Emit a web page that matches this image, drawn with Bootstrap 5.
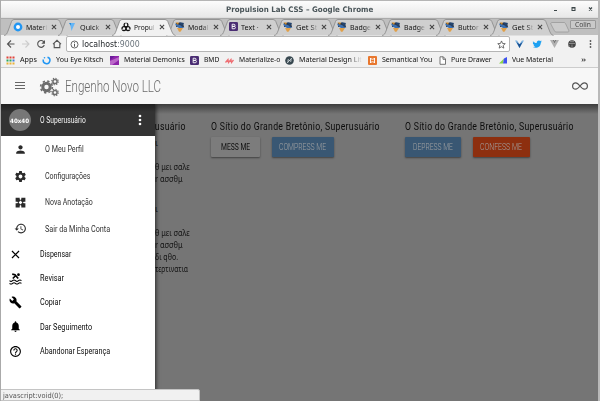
<!DOCTYPE html>
<html lang="pt">
<head>
<meta charset="utf-8">
<title>Propulsion Lab CSS</title>
<link href="https://cdn.jsdelivr.net/npm/bootstrap@5.3.0/dist/css/bootstrap.min.css" rel="stylesheet">
<style>
html,body{height:401px;overflow:hidden}
body{font-family:"Noto Sans","Open Sans",sans-serif;font-size:7.6px;line-height:1;color:#111;background:#f1f1f1}
svg{display:block;flex:none}
.fit{display:inline-block;flex:none;white-space:nowrap;transform-origin:0 50%}
.window{width:600px;height:401px;border-left:1px solid #aaa;border-right:2px solid #b9b9b9;overflow:hidden}
.titlebar{height:18px;background:linear-gradient(#b5b5b5 0,#b5b5b5 1px,#fcfcfc 1px,#e8e8e8 17px,#d6d6d6)}
.wtitle{font:bold 7.6px "DejaVu Sans",sans-serif;color:#4b565a;padding-left:225px;flex:none;width:549px}
.tabstrip{height:17px;background:#bfbfbf;padding-left:3px;border-top:1px solid #aaa}
.ctab{width:54px;height:16px;flex:none}
.ctab .shape{position:absolute;left:0;top:0}
.ctab .face{position:relative;width:54px;height:15px;padding-left:9px}
.ctab.active-tab{z-index:2}
.tname{width:22px;margin-left:3px;margin-right:3px;height:12px;line-height:12px;-webkit-mask-image:linear-gradient(90deg,#000 65%,transparent 98%)}
.newtab{margin:3px 0 0 6px}
.user{width:26px;height:9px;margin:1px 2px 0 auto;border:1px solid #999;background:#c9c9c9;color:#444;border-radius:1px}
.toolbar{height:18px;background:#f1f1f1}
.omni{width:444px;height:16px;background:#fff;border:1px solid #b5b5b5;border-radius:2px;padding:0 3px 0 3px;margin-left:4px}
.url{font:8.4px "DejaVu Sans",sans-serif;margin-left:3px}
.marks{display:grid;grid-template-columns:36px 68px 80px 35px 60px 83px 69.5px 61px 82px 12px;height:15px;padding-left:5px;align-items:center;border-bottom:1px solid #ccc}
.marks svg{width:9px;height:9px}
.marks .lbl{margin-left:4.5px}
.fade-end{-webkit-mask-image:linear-gradient(90deg,#000 80%,transparent)}
.appbar{height:36px;background:#f7f7f7;z-index:3;position:relative}
.brand{font:300 16.5px Roboto,sans-serif;color:#6c6c6c;margin-left:6px}
.stage{height:297px;background:#757575;position:relative;overflow:hidden}
.stage::before{content:"";position:absolute;inset:0 0 auto;height:10px;background:linear-gradient(#3d3d3d,#757575)}
.pane{padding-top:17px;width:194px;flex:none}
.pane h2{font:400 10.5px/12px Roboto,sans-serif;color:#0c0c0c;letter-spacing:.35px;margin:0 0 4px;height:12px}
.push{height:20px;border-radius:1px;font:300 8.6px Roboto,sans-serif;border:0;padding:0;box-shadow:0 1px 2px rgba(0,0,0,.45);color:#a2a2a2;display:flex;align-items:center;justify-content:center;flex:none}
.push-flat{background:#7c7c7c;color:#111;font-weight:400;width:49px}
.push-blue{background:#395773}
.push-red{background:#8d2f0f}
.w-compress{width:62px}
.w-depress{width:55.5px}
.w-confess{width:57px}
.gap-btn{gap:12px}
.greek{padding-left:154px;font:8px/12.05px "Noto Sans",sans-serif;color:#141414}
.greek div{height:12.05px;white-space:nowrap}
.greek .para{height:auto;margin-bottom:17.8px}
.drawer{position:absolute;left:0;top:0;width:153.5px;height:297px;background:#fff;box-shadow:1px 0 4px rgba(0,0,0,.65);font-family:Roboto,sans-serif;font-size:8.6px}
.who{height:32px;background:linear-gradient(#202020,#333 8px);color:#f4f4f4;margin-bottom:.5px}
.avatar{width:22px;height:22px;margin-left:8px;background:#777;font:bold 6px "DejaVu Sans",sans-serif;color:#fff}
.who-name{margin-left:9px}
.opt{height:26.4px;padding-left:12.5px;color:#333}
.opt .fit{margin-left:18px}
.act{height:24.25px;padding-left:8px;color:#0a0a0a}
.act .fit{margin-left:17.5px}
.status{position:absolute;left:-1px;bottom:0;width:200px;height:12px;background:#f1f1f1;border:1px solid #c4c4c4;color:#555;font:7.2px "DejaVu Sans",sans-serif;padding-left:2px;border-radius:0 2px 0 0}
</style>
<script src="https://cdn.jsdelivr.net/npm/bootstrap@5.3.0/dist/js/bootstrap.bundle.min.js"></script>
</head>
<body>
<svg width="0" height="0" class="position-absolute">
<defs>
<symbol id="shape" viewBox="0 0 64 17"><path d="M0 16.5C2.5 16 3 14.500 4 12L7.500 2.500Q8.200.500 10 .500H53Q55 .500 55.800 2.500L60 13Q61 16 63.500 16.500" stroke="#8f8f8f" stroke-width=".9"/></symbol>
<symbol id="mdl" viewBox="0 0 10 10"><path fill="#2a3444" d="M1 1H8L9 5H1z"/><path fill="#3b6fb0" d="M0 1.500L5 3 9.500 6H4L1 4z"/><path fill="#e0a04a" d="M2 6H8L5.500 9.700H4z"/><path fill="#c9892e" d="M.5.500H4L3 3z"/><path fill="#23436d" d="M4 0L9 1 7 5z"/></symbol>
<symbol id="cls" viewBox="0 0 6 6"><path d="M.9.900L5.100 5.100M5.100.900L.9 5.100" stroke="#444" stroke-width="1.050"/></symbol>
<symbol id="boot" viewBox="0 0 10 10"><rect width="10" height="10" rx="1.500" fill="#4a2d73"/><path d="M3.500 2.500H5.500a1.200 1.200 0 0 1 0 2.400H3.500zM3.500 4.900H5.800a1.300 1.300 0 0 1 0 2.600H3.500z" fill="none" stroke="#fff" stroke-width="1"/></symbol>
<symbol id="gear" viewBox="0 0 24 24"><path d="M19.430 12.980c.04-.32.070-.64.070-.98s-.03-.66-.07-.98l2.110-1.650c.19-.15.240-.42.120-.64l-2-3.460c-.12-.22-.39-.3-.61-.22l-2.490 1c-.52-.4-1.080-.73-1.690-.98l-.38-2.650C14.460 2.180 14.250 2 14 2h-4c-.25 0-.46.180-.49.420l-.38 2.650c-.61.250-1.170.590-1.690.980l-2.490-1c-.23-.09-.49 0-.61.220l-2 3.460c-.13.220-.07.490.12.640l2.110 1.650c-.04.320-.07.650-.07.980s.03.660.070.980l-2.110 1.650c-.19.150-.24.420-.12.640l2 3.460c.12.220.39.300.61.220l2.490-1c.52.400 1.080.730 1.690.980l.38 2.650c.03.240.24.420.49.420h4c.25 0 .46-.18.490-.42l.38-2.650c.61-.25 1.170-.59 1.690-.98l2.490 1c.23.090.49 0 .61-.22l2-3.460c.12-.22.070-.49-.12-.64l-2.110-1.650zM12 15.500c-1.930 0-3.500-1.570-3.500-3.500s1.570-3.500 3.500-3.500 3.500 1.570 3.500 3.500-1.570 3.500-3.500 3.500z"/></symbol>
</defs>
</svg>
<div class="window d-flex flex-column">
  <div class="titlebar d-flex align-items-center flex-shrink-0">
    <div class="wtitle"><span class="fit" data-w="147">Propulsion Lab CSS – Google Chrome</span></div>
    <svg width="48" height="9" viewBox="0 0 48 9" fill="#3c4648"><rect x="4" y="5" width="3" height="1"/><path fill-rule="evenodd" d="M21.500 2h4v4h-4zM22.500 3.500v1.500h2V3.500z"/><path d="M39 2.500l3 3m0-3l-3 3" stroke="#3c4648" stroke-width="1.200"/></svg>
  </div>
  <div class="tabstrip d-flex flex-shrink-0">
    <div class="ctab position-relative"><svg class="shape" width="64" height="17" fill="#cfcfcf"><use href="#shape"/></svg><div class="face d-flex align-items-center"><svg width="10" height="10" viewBox="0 0 10 10"><circle cx="5" cy="5" r="3.200" fill="#fff" stroke="#2196f3" stroke-width="2.400"/></svg><div class="tname"><span class="fit" data-w="21">Materi</span></div><svg width="6" height="6"><use href="#cls"/></svg></div></div>
    <div class="ctab position-relative"><svg class="shape" width="64" height="17" fill="#cfcfcf"><use href="#shape"/></svg><div class="face d-flex align-items-center"><svg width="10" height="10" viewBox="0 0 10 10"><path fill="#1a86d8" d="M2 1H5L4 4z"/><path fill="#64b5f6" d="M4 1H8L4.500 9 3.500 4z"/></svg><div class="tname"><span class="fit" data-w="19">Quick</span></div><svg width="6" height="6"><use href="#cls"/></svg></div></div>
    <div class="ctab active-tab position-relative"><svg class="shape" width="64" height="17" fill="#f1f1f1"><use href="#shape"/></svg><div class="face d-flex align-items-center"><svg width="10" height="10" viewBox="0 0 10 10" fill="none" stroke="#111" stroke-width="1.250"><circle cx="5" cy="3" r="1.900"/><circle cx="3" cy="6.500" r="2"/><circle cx="7" cy="6.500" r="2"/><path stroke="#f1f1f1" stroke-width="1" d="M5 0V2M0 8.500l1.500-1M10 8.500l-1.500-1"/></svg><div class="tname"><span class="fit" data-w="21">Propul</span></div><svg width="6" height="6"><use href="#cls"/></svg></div></div>
    <div class="ctab position-relative"><svg class="shape" width="64" height="17" fill="#cfcfcf"><use href="#shape"/></svg><div class="face d-flex align-items-center"><svg width="10" height="10"><use href="#mdl"/></svg><div class="tname"><span class="fit" data-w="20">Modal</span></div><svg width="6" height="6"><use href="#cls"/></svg></div></div>
    <div class="ctab position-relative"><svg class="shape" width="64" height="17" fill="#cfcfcf"><use href="#shape"/></svg><div class="face d-flex align-items-center"><svg width="9" height="9"><use href="#boot"/></svg><div class="tname"><span class="fit" data-w="18">Text ·</span></div><svg width="6" height="6"><use href="#cls"/></svg></div></div>
    <div class="ctab position-relative"><svg class="shape" width="64" height="17" fill="#cfcfcf"><use href="#shape"/></svg><div class="face d-flex align-items-center"><svg width="10" height="10"><use href="#mdl"/></svg><div class="tname"><span class="fit" data-w="21">Get St</span></div><svg width="6" height="6"><use href="#cls"/></svg></div></div>
    <div class="ctab position-relative"><svg class="shape" width="64" height="17" fill="#cfcfcf"><use href="#shape"/></svg><div class="face d-flex align-items-center"><svg width="10" height="10"><use href="#mdl"/></svg><div class="tname"><span class="fit" data-w="21">Badge</span></div><svg width="6" height="6"><use href="#cls"/></svg></div></div>
    <div class="ctab position-relative"><svg class="shape" width="64" height="17" fill="#cfcfcf"><use href="#shape"/></svg><div class="face d-flex align-items-center"><svg width="10" height="10"><use href="#mdl"/></svg><div class="tname"><span class="fit" data-w="21">Badge</span></div><svg width="6" height="6"><use href="#cls"/></svg></div></div>
    <div class="ctab position-relative"><svg class="shape" width="64" height="17" fill="#cfcfcf"><use href="#shape"/></svg><div class="face d-flex align-items-center"><svg width="10" height="10"><use href="#mdl"/></svg><div class="tname"><span class="fit" data-w="22">Button</span></div><svg width="6" height="6"><use href="#cls"/></svg></div></div>
    <div class="ctab position-relative"><svg class="shape" width="64" height="17" fill="#cfcfcf"><use href="#shape"/></svg><div class="face d-flex align-items-center"><svg width="10" height="10"><use href="#mdl"/></svg><div class="tname"><span class="fit" data-w="21">Get St</span></div><svg width="6" height="6"><use href="#cls"/></svg></div></div>
    <svg class="newtab" width="20" height="11" viewBox="0 0 20 11"><path d="M1.500.500H14Q15 .500 15.500 1.500L19 9Q19 10 18 10H6Q5 10 4.500 9L.8 2Q.5.800 1.500.500z" fill="#cbcbcb" stroke="#999" stroke-width=".8"/></svg>
    <div class="user d-flex align-items-center ps-1"><span class="fit" data-w="16">Colin</span></div>
  </div>
  <div class="toolbar d-flex align-items-center flex-shrink-0">
    <svg width="61" height="16" viewBox="0 0 61 16" fill="none" stroke="#555" stroke-width="1.100"><path d="M13.500 8H6.500M10 4.500L6.500 8 10 11.500"/><path stroke="#ccc" d="M21 8H28M24.500 4.500L28 8 24.500 11.500"/><path d="M43 6.200A3.400 3.400 0 1 0 43.300 9"/><path fill="#555" stroke="none" d="M44 4V7.700H40.300z"/><path d="M52 8.200L56 4.300 60 8.200M53.200 7.500V11.600H58.800V7.500"/></svg>
    <div class="omni d-flex align-items-center">
      <svg width="9" height="9" viewBox="0 0 9 9"><circle cx="4.500" cy="4.500" r="3.500" fill="none" stroke="#555" stroke-width=".9"/><path d="M4 4h1v2.800H4zM4 2.300h1v1H4z" fill="#555"/></svg>
      <div class="url"><span class="fit" data-w="58"><span class="text-dark">localhost</span><span class="text-secondary">:9000</span></span></div>
      <svg class="ms-auto" width="9" height="9" viewBox="0 0 24 24"><path d="M12 2.500l2.800 6.700 7.200.6-5.500 4.800 1.700 7.100L12 17.900l-6.200 3.800 1.700-7.100L2 9.800l7.200-.6z" fill="none" stroke="#555" stroke-width="2.200"/></svg>
    </div>
    <svg width="86" height="16" viewBox="0 0 86 16"><path fill="#7fb3e0" d="M5 4.500H7L9.500 8 12 4.500H14L9.500 12z"/><path fill="#174f91" d="M6.500 6L9.500 12 12.500 6 9.500 8.200z"/><path fill="#1da1f2" d="M23 5.200c1 1.200 2.200 1.700 3.700 1.800-.3-2 2.200-3.300 3.600-1.900l1.300-.5-.8 1.200 1.100-.3-1.100 1.200c.1 4-4.300 6.300-8 4.300 1 .1 1.800-.2 2.500-.7-.9-.1-1.500-.6-1.800-1.400l.8-.1c-.9-.3-1.400-1-1.400-1.900l.8.200C22.800 6.500 22.700 5.800 23 5.200z"/><path fill="#b0b0b0" d="M40 4H42.500L44.500 7.500 46.500 4H49L44.500 12z"/><path fill="#777" d="M42.500 4H44L44.500 5 45 4H46.500L44.500 7.500z"/><circle cx="62" cy="8" r="3.800" fill="#444"/><path d="M59 7.500h6M62 8.500v3M60 5.700l4 0M59.500 9.500l-1 1.500" stroke="#999" stroke-width=".8"/><g fill="#555"><circle cx="80.500" cy="5" r=".9"/><circle cx="80.500" cy="8" r=".9"/><circle cx="80.500" cy="11" r=".9"/></g></svg>
  </div>
  <div class="marks flex-shrink-0">
    <div class="d-flex align-items-center"><svg viewBox="0 0 9 9"><path d="M.5 1.500h8" stroke="#e0443a" stroke-width="2" stroke-dasharray="2 1"/><path d="M.5 4.500h5" stroke="#2da85c" stroke-width="2" stroke-dasharray="2 1"/><path d="M6.500 4.500h2" stroke="#3b7de0" stroke-width="2"/><path d="M.5 7.500h8" stroke="#eab43a" stroke-width="2" stroke-dasharray="2 1"/></svg><span class="lbl fit" data-w="17">Apps</span></div>
    <div class="d-flex align-items-center"><svg viewBox="0 0 9 9"><path d="M5.500 1.200A3.300 3.300 0 1 1 1.400 3.500" fill="none" stroke="#2196f3" stroke-width="1.500"/><circle cx="2.500" cy="1.800" r=".8" fill="#2196f3"/></svg><span class="lbl fit" data-w="47.500">You Eye Kitsch</span></div>
    <div class="d-flex align-items-center"><svg viewBox="0 0 9 9"><path fill="#8e24aa" d="M0 0h9v9H0z"/><path fill="#ba68c8" d="M0 5L9 1v3L2 9H0z"/><path fill="#6a1b9a" d="M0 0h5L0 4z"/></svg><span class="lbl fit" data-w="61">Material Demonics</span></div>
    <div class="d-flex align-items-center"><svg><use href="#boot"/></svg><span class="lbl fit" data-w="15">BMD</span></div>
    <div class="d-flex align-items-center"><svg viewBox="0 0 9 9" fill="none" stroke="#ee6e73" stroke-width="1.300"><path d="M.5 6.500L3 3.500 3.500 6.500 6 3.500 6.500 6.500 8.500 4"/></svg><span class="lbl fit" data-w="41">Materialize-o</span></div>
    <div class="d-flex align-items-center"><svg viewBox="0 0 9 9"><circle cx="4.500" cy="4.500" r="4.300" fill="#37474f"/><path d="M3 6.500V3.500L6 5.500V2.500M2 7l5-5" stroke="#cfd8dc" stroke-width=".8" fill="none"/></svg><span class="lbl fit fade-end" data-w="63">Material Design Lit</span></div>
    <div class="d-flex align-items-center"><svg viewBox="0 0 9 9"><rect width="9" height="9" rx="1" fill="#e8772e"/><path d="M2 2.500q2.500 1.500 5 0M2 6.500q2.500-1.500 5 0M2.500 2v5M6.500 2v5" stroke="#fff" stroke-width=".9" fill="none"/></svg><span class="lbl fit" data-w="50">Semantical You</span></div>
    <div class="d-flex align-items-center"><svg viewBox="0 0 9 9"><path d="M2 .8H5.300L7.500 3V8.300H2zM5 .8V3.300H7.500" fill="#fff" stroke="#555" stroke-width=".8"/></svg><span class="lbl fit" data-w="41">Pure Drawer</span></div>
    <div class="d-flex align-items-center"><svg viewBox="0 0 9 9"><path fill="#8bd34a" d="M0 7.500L5 2.500 4 7.500z"/><path fill="#3f51f0" d="M5 2.500L8 1V7.500H4z"/></svg><span class="lbl fit" data-w="41">Vue Material</span></div>
    <div><span class="fit" data-w="5.500">»</span></div>
  </div>
  <div class="appbar d-flex align-items-center flex-shrink-0">
    <svg width="36" height="36" viewBox="0 0 36 36"><path d="M14 14.500H24M14 17.500H24M14 20.500H24" stroke="#666" stroke-width="1"/></svg>
    <svg width="22" height="22" viewBox="0 0 22 22"><g fill="none" stroke="#6c6c6c"><circle cx="9.500" cy="12" r="3.700" stroke-width="3"/><circle cx="9.500" cy="12" r="5.900" stroke-width="1.600" stroke-dasharray="2.320 2.320"/><circle cx="18" cy="6.500" r="2.100" stroke-width="1.500"/><circle cx="18" cy="6.500" r="3.300" stroke-width="1.100" stroke-dasharray="1.300 1.290"/><circle cx="18" cy="17.500" r="2.100" stroke-width="1.500"/><circle cx="18" cy="17.500" r="3.300" stroke-width="1.100" stroke-dasharray="1.300 1.290"/></g></svg>
    <div class="brand"><span class="fit" data-w="96">Engenho Novo LLC</span></div>
    <svg class="ms-auto me-2" width="20" height="16" viewBox="0 0 20 16"><path d="M10 8C8 5.500 6.800 4.800 5.800 4.800a3.200 3.200 0 0 0 0 6.400C6.800 11.200 8 10.500 10 8s3.200-3.200 4.200-3.200a3.200 3.200 0 0 1 0 6.400C13.200 11.200 12 10.500 10 8z" fill="none" stroke="#555" stroke-width="1.200"/></svg>
  </div>
  <div class="stage flex-shrink-0">
    <div class="d-flex">
      <div class="pane"><h2 class="ps-3"><span class="fit" data-w="169">O Sítio do Grande Bretônio, Superusuário</span></h2>
        <div class="greek">
          <div class="para"><div>ι</div><div></div><div><span class="fit" data-w="35">θ μει σαλε</span></div><div><span class="fit" data-w="28">r ασσθμ</span></div></div>
          <div class="para"><div>ι</div><div></div><div><span class="fit" data-w="35">θ μει σαλε</span></div><div><span class="fit" data-w="28">r ασσθμ</span></div><div><span class="fit" data-w="23">δι qθο.</span></div><div><span class="fit" data-w="33">τερτινατια</span></div></div>
        </div>
      </div>
      <div class="pane ps-3"><h2><span class="fit" data-w="169">O Sítio do Grande Bretônio, Superusuário</span></h2>
        <div class="d-flex gap-btn"><button class="push push-flat"><span class="fit" data-w="29">MESS ME</span></button><button class="push push-blue w-compress"><span class="fit" data-w="47">COMPRESS ME</span></button></div></div>
      <div class="pane ps-3"><h2><span class="fit" data-w="169">O Sítio do Grande Bretônio, Superusuário</span></h2>
        <div class="d-flex gap-btn"><button class="push push-blue w-depress"><span class="fit" data-w="40">DEPRESS ME</span></button><button class="push push-red w-confess"><span class="fit" data-w="42">CONFESS ME</span></button></div></div>
    </div>
    <div class="drawer">
      <div class="who d-flex align-items-center"><div class="avatar rounded-circle d-flex align-items-center justify-content-center"><span class="fit" data-w="19.500">40x40</span></div><span class="fit who-name" data-w="46">O Superusuário</span>
        <svg class="ms-auto" width="28" height="12" viewBox="0 0 28 12" fill="#fff"><circle cx="13" cy="2" r="1.300"/><circle cx="13" cy="6" r="1.300"/><circle cx="13" cy="10" r="1.300"/></svg></div>
      <div class="opt d-flex align-items-center"><svg width="13" height="13" viewBox="0 0 24 24" fill="#2a2a2a"><path d="M12 12c2.210 0 4-1.790 4-4s-1.790-4-4-4-4 1.790-4 4 1.790 4 4 4zm0 2c-2.670 0-8 1.340-8 4v2h16v-2c0-2.660-5.330-4-8-4z"/></svg><span class="fit" data-w="39">O Meu Perfil</span></div>
      <div class="opt d-flex align-items-center"><svg width="13" height="13" fill="#2a2a2a"><use href="#gear"/></svg><span class="fit" data-w="45">Configurações</span></div>
      <div class="opt d-flex align-items-center"><svg width="13" height="13" viewBox="0 0 24 24" fill="#2a2a2a"><path fill-rule="evenodd" d="M3 3H21V21H3zM10.500 3V6L12 7.500 13.500 6V3zM10.500 21V18L12 16.500 13.500 18V21zM3 10.500H6L7.500 12 6 13.500H3zM21 10.500H18L16.500 12 18 13.500H21zM12 8.500L15.500 12 12 15.500 8.500 12z"/></svg><span class="fit" data-w="48">Nova Anotação</span></div>
      <div class="opt d-flex align-items-center"><svg width="13" height="13" viewBox="0 0 24 24" fill="#2a2a2a"><path d="M13 3c-4.970 0-9 4.030-9 9H1l3.890 3.890.07.140L9 12H6c0-3.870 3.130-7 7-7s7 3.130 7 7-3.130 7-7 7c-1.930 0-3.680-.79-4.940-2.060l-1.420 1.420C8.270 19.990 10.510 21 13 21c4.970 0 9-4.030 9-9s-4.030-9-9-9zm-1 5v5l4.280 2.540.72-1.210-3.500-2.080V8H12z"/></svg><span class="fit" data-w="65">Sair da Minha Conta</span></div>
      <div class="act d-flex align-items-center"><svg width="13" height="13" viewBox="0 0 24 24"><path d="M5.500 5.500l13 13M18.500 5.500l-13 13" stroke="#000" stroke-width="2.200"/></svg><span class="fit" data-w="31">Dispensar</span></div>
      <div class="act d-flex align-items-center"><svg width="13" height="13" viewBox="0 0 24 24" fill="none" stroke="#000" stroke-width="2"><path d="M1 16q2.700 2.500 5.500 0t5.500 0 5.500 0 5.500 0M1 21q2.700 2.500 5.500 0t5.500 0 5.500 0 5.500 0"/><path d="M6 4l5 1 6 7M7 12l5-5" stroke-width="3"/><circle cx="17.500" cy="5" r="1.500" fill="#000"/></svg><span class="fit" data-w="24">Revisar</span></div>
      <div class="act d-flex align-items-center"><svg width="13" height="13" viewBox="0 0 24 24"><path d="M22.700 19l-9.100-9.100c.9-2.300.4-5-1.500-6.900-2-2-5-2.400-7.400-1.300L9 6 6 9 1.600 4.700C.4 7.100.9 10.100 2.900 12.100c1.900 1.900 4.600 2.400 6.900 1.500l9.100 9.100c.4.400 1 .4 1.400 0l2.300-2.300c.5-.4.500-1.100.1-1.400z"/></svg><span class="fit" data-w="21">Copiar</span></div>
      <div class="act d-flex align-items-center"><svg width="13" height="13" viewBox="0 0 24 24"><path d="M12 22c1.100 0 2-.9 2-2h-4c0 1.100.9 2 2 2zm6-6v-5c0-3.070-1.640-5.640-4.500-6.320V4c0-.83-.67-1.500-1.500-1.500s-1.500.67-1.500 1.500v.68C7.630 5.360 6 7.920 6 11v5l-2 2v1h16v-1l-2-2z"/></svg><span class="fit" data-w="52">Dar Seguimento</span></div>
      <div class="act d-flex align-items-center"><svg width="13" height="13" viewBox="0 0 24 24"><path d="M11 18h2v-2h-2v2zm1-16C6.480 2 2 6.480 2 12s4.480 10 10 10 10-4.480 10-10S17.520 2 12 2zm0 18c-4.410 0-8-3.590-8-8s3.590-8 8-8 8 3.590 8 8-3.590 8-8 8zm0-14c-2.210 0-4 1.790-4 4h2c0-1.100.9-2 2-2s2 .9 2 2c0 2-3 1.750-3 5h2c0-2.250 3-2.500 3-5 0-2.210-1.790-4-4-4z"/></svg><span class="fit" data-w="70">Abandonar Esperança</span></div>
    </div>
    <div class="status d-flex align-items-center"><span class="fit" data-w="60">javascript:void(0);</span></div>
  </div>
</div>
<script>
// Squeeze each label to its nominal width, in paint and in layout
document.querySelectorAll('.fit').forEach(function(el){
  var w = el.offsetWidth, t = +el.dataset.w;
  el.style.transform = 'scaleX(' + (t / w) + ')';
  el.style.marginRight = (t - w) + 'px';
});
</script>
</body>
</html>
